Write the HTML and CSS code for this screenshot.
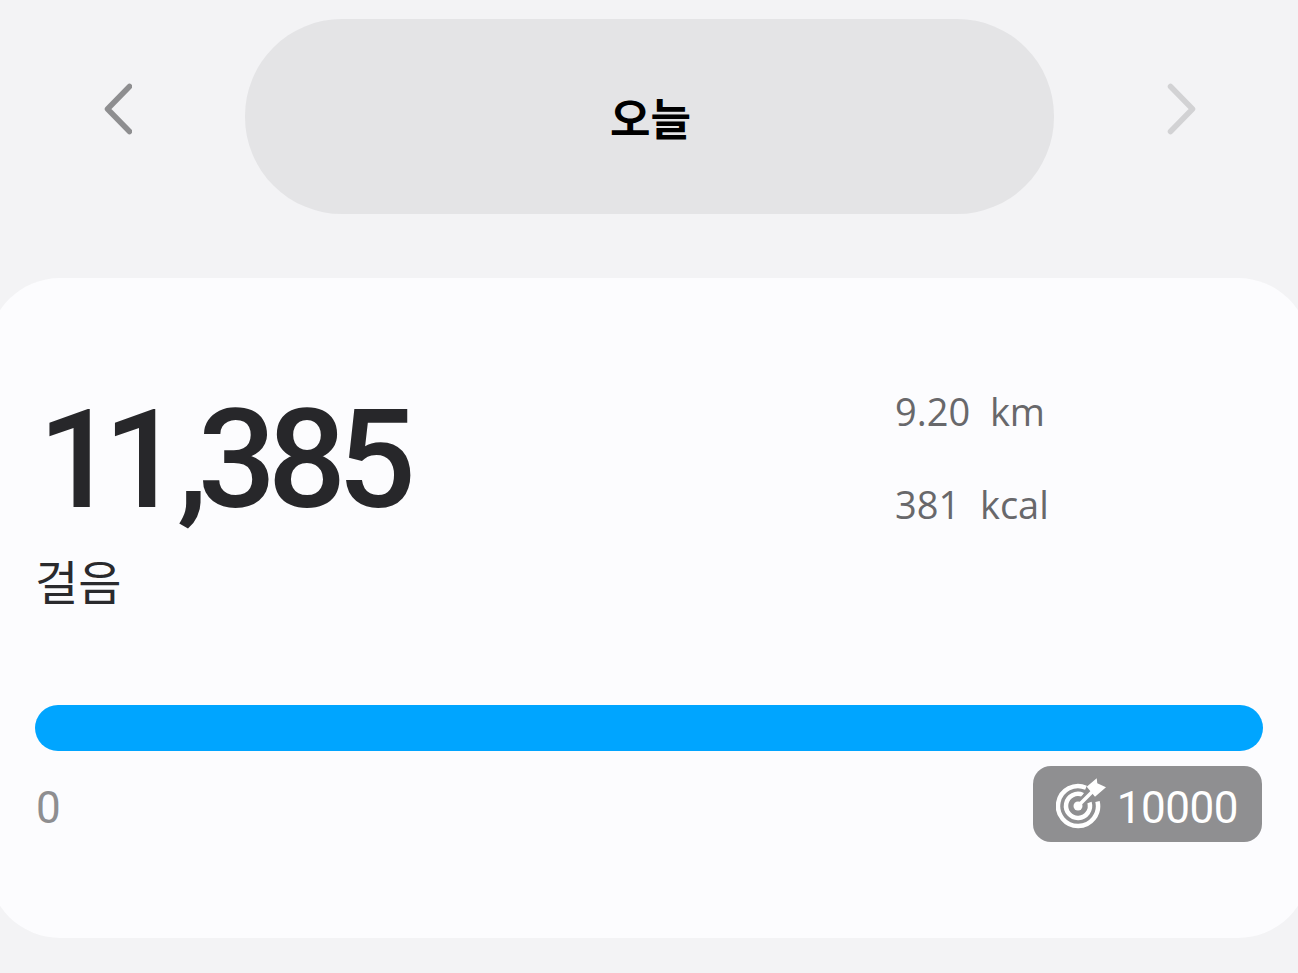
FILE: index.html
```html
<!DOCTYPE html>
<html lang="ko">
<head>
  <meta charset="UTF-8">
  <meta name="viewport" content="width=device-width, initial-scale=1.0">
  <title>오늘 걸음</title>
  <link rel="stylesheet" href="styles.css">
</head>
<body>
<header class="date-bar">
  <button class="arrow" type="button" aria-label="이전">
    <svg width="28" height="52" viewBox="0 0 28 52"><path d="M25.500 3.500 L3.500 26 L25.500 48.500"/></svg>
  </button>
  <div class="date-pill">오늘</div>
  <button class="arrow arrow-off" type="button" aria-label="다음">
    <svg width="30" height="52" viewBox="0 0 30 52"><path d="M3.500 3.500 L25.500 26 L3.500 48.500"/></svg>
  </button>
</header>

<main class="card">
  <section class="summary">
    <div class="steps">
      <div class="steps-num"><span class="tight">11</span><span class="comma">,</span>385</div>
      <div class="steps-label">걸음</div>
    </div>
    <div class="extra">
      <div>9.20&nbsp; km</div>
      <div>381&nbsp; kcal</div>
    </div>
  </section>

  <div class="bar"></div>

  <div class="bar-foot">
    <span class="zero">0</span>
    <span class="goal">
      <svg class="goal-icon" width="50" height="52" viewBox="0 0 50 52">
        <path class="ring" d="M30 10.700 A20 20 0 1 0 41.500 24.500"/>
        <path class="ring" d="M27 18 A12 12 0 1 0 33.500 25.500"/>
        <path class="shaft-gap" d="M26 25 L38 13"/>
        <circle cx="22" cy="29" r="4.500" fill="#fff"/>
        <path class="shaft" d="M22 29 L37 14"/>
        <path fill="#fff" d="M30.700 9.700 L40.700 1.300 L41.300 6.300 L50 10.300 L39 19.700 Z"/>
      </svg>
      <span class="goal-num">10000</span>
    </span>
  </div>
</main>
</body>
</html>
```

FILE: styles.css
```css
html, body {
  height: 100%;
}

body {
  margin: 0;
  background-color: #f3f3f5;
  font-family: Roboto, "Noto Sans CJK KR", sans-serif;
  overflow: hidden;
}

.date-bar {
  display: flex;
  align-items: flex-start;
  justify-content: space-between;
  padding: 19px 101px 0 104px;
}

.arrow {
  padding: 0;
  margin-top: 64px;
  border: none;
  background: none;
  line-height: 0;
}

.arrow path {
  fill: none;
  stroke: #8e8e90;
  stroke-width: 5.500;
  stroke-linecap: round;
  stroke-linejoin: round;
}

.arrow-off path {
  stroke: #d2d2d4;
}

.date-pill {
  width: 809px;
  height: 195px;
  padding-left: 2px;
  box-sizing: border-box;
  border-radius: 97px;
  background-color: #e4e4e6;
  display: flex;
  align-items: center;
  justify-content: center;
  font-family: "Noto Sans CJK KR", sans-serif;
  font-size: 44px;
  font-weight: 700;
  color: #000;
}

.card {
  height: 660px;
  margin: 64px -12px 0;
  padding: 0 47px;
  box-sizing: border-box;
  background-color: #fcfcfe;
  border-radius: 72px;
}

.summary {
  display: flex;
  padding-top: 106px;
}

.steps {
  width: 860px;
}

.steps-num {
  padding: 2px 0 0 3px;
  font-size: 138px;
  font-weight: 500;
  line-height: 148px;
  letter-spacing: -8.500px;
  color: #27272a;
}

.tight {
  letter-spacing: -13px;
}

.comma {
  letter-spacing: -10px;
  margin-left: 8px;
}

.steps-label {
  margin-top: 18px;
  font-family: "Noto Sans CJK KR", sans-serif;
  font-size: 47px;
  line-height: 56px;
  color: #2a2a2d;
}

.extra {
  font-family: "Open Sans", sans-serif;
  font-size: 38px;
  line-height: 56px;
  color: #68686b;
  margin-top: -1px;
}

.extra div {
  margin-bottom: 37px;
}

.bar {
  height: 46px;
  margin-top: 97px;
  border-radius: 23px;
  background-color: #00a5ff;
}

.bar-foot {
  display: flex;
  justify-content: space-between;
  align-items: center;
  margin-top: 15px;
}

.zero {
  padding: 8px 0 0 1px;
  font-size: 44px;
  color: #8e8e90;
}

.goal {
  display: flex;
  align-items: center;
  gap: 11px;
  height: 76px;
  padding: 0 24px 0 23px;
  margin-right: 1px;
  border-radius: 18px;
  background-color: #8f8f91;
  color: #fff;
}

.goal-num {
  padding-top: 7px;
  font-size: 44px;
  letter-spacing: -0.500px;
}

.goal-icon {
  margin-top: -3px;
}

.goal-icon .ring,
.goal-icon .shaft {
  fill: none;
  stroke: #fff;
  stroke-width: 4.500;
}

.goal-icon .shaft {
  stroke-width: 3.500;
}

.goal-icon .shaft-gap {
  fill: none;
  stroke: #8f8f91;
  stroke-width: 9;
}
```
